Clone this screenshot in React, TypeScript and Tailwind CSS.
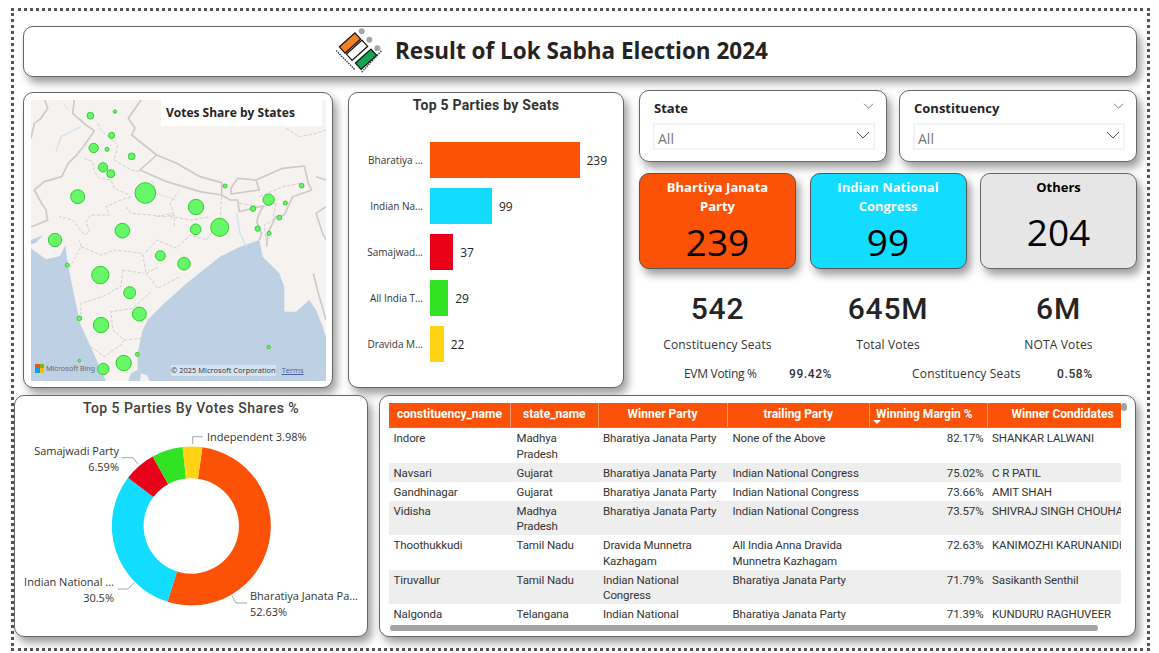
const ORANGE = '#fb5207'
const CYAN = '#12dcff'
const RED = '#ea0019'
const GREEN = '#32e324'
const YELLOW = '#ffd314'

const cardClass = 'rounded-[10px] border border-[#666] bg-white shadow-[4px_6px_8px_rgba(0,0,0,0.38)]'

const bubbles: [number, number, number][] = [
  [271, 347, 10], [345, 335, 5], [335, 406, 9], [281, 444, 14], [321, 448, 6], [395, 469, 10],
  [309, 502, 14], [332, 521, 12], [233, 590, 21], [436, 579, 31], [675, 558, 6], [905, 557, 7],
  [806, 599, 17], [856, 609, 6], [759, 626, 8], [588, 621, 23], [838, 653, 7], [659, 682, 27],
  [587, 688, 16], [367, 692, 22], [773, 686, 8], [807, 700, 6], [165, 720, 20], [202, 795, 6],
  [481, 767, 15], [552, 791, 19], [301, 825, 26], [389, 878, 18], [418, 942, 21], [238, 955, 7],
  [303, 975, 23], [806, 1041, 5], [412, 1063, 6], [238, 1082, 4], [371, 1089, 23], [310, 1107, 17],
]

const borders = [
  'M93 415 L103 370 L123 355 L143 325 L135 300',
  'M223 300 L218 340 L258 375 L283 392 L250 440 L225 470 L205 490 L185 530 L133 545 L103 570 L125 610 L138 630 L143 660 L108 675 L93 680',
  'M423 300 L385 355 L405 385 L395 405 L470 465 L420 510 L500 545 L600 575 L665 585 L665 548 L600 530 L530 490 L470 465',
  'M665 585 L690 600 L713 600 L718 635 L790 618 L778 640 L770 665 L785 700 L778 720',
  'M693 565 L713 535 L768 540 L778 570 L693 582 L693 565',
  'M768 540 L848 505 L913 498 L925 550 L935 570 L878 590 L853 645 L828 650 L803 700 L800 740',
  'M948 530 L978 540',
  'M978 620 L948 640 L968 700 L978 720',
  'M940 820 L955 880 L978 960',
]

const stateLines = [
  'M253 475 L278 485 L283 515 L298 535 L333 540 L343 565 L388 585',
  'M393 590 L363 600 L318 620 L328 645 L273 645 L258 665 L268 695 L253 705 L218 660 L178 650',
  'M378 620 L393 640 L453 645 L493 650 L523 645 L523 680',
  'M293 370 L303 390 L353 435 L343 480 L393 510 L423 515',
  'M208 805 L243 740 L238 720',
  'M243 740 L303 765 L343 750 L428 760 L438 820 L478 800',
  'M343 870 L308 890 L243 910 L243 945',
  'M368 810 L363 860 L343 870 M368 810 L433 820',
  'M453 875 L398 925 L333 935 L338 990 L373 1020 L423 1015',
  'M273 1040 L313 1070 L363 1035 L373 1020',
  'M438 820 L473 865 L540 830',
  'M470 650 L520 640 L510 610 L540 570',
  'M660 660 L620 720 L570 705 L530 745 L470 720 L435 760',
  'M665 590 L660 660 M510 650 L575 660 L630 650',
  'M718 610 L788 620 L828 610 M778 590 L848 560 L903 550',
  'M828 610 L818 660 L793 675 L798 720',
  'M858 385 L898 410 L948 400 L978 390',
]

function MapVisual() {
  return (
    <svg viewBox="93 300 885 843" className="block h-full w-full">
      <defs>
        <filter id="soft" x="0" y="0" width="100%" height="100%">
          <feGaussianBlur stdDeviation="1.3" />
        </filter>
      </defs>
      <g filter="url(#soft)">
        <rect x="93" y="300" width="885" height="843" fill="#f5f2ef" />
        <path
          d="M93 745 L138 778 L180 768 L196 735 L203 790 L215 850 L240 970 L290 1080 L318 1143 L385 1143 L393 1120 L413 1110 L413 1060 L428 990 L443 960 L493 910 L560 850 L610 810 L660 770 L720 740 L778 720 L788 770 L838 820 L853 860 L853 935 L888 935 L928 900 L948 930 L968 980 L978 1010 L978 1143 L93 1143 Z"
          fill="#bdd0e4"
        />
        <path d="M93 720 L128 706 L108 728 L93 733 Z" fill="#bdd0e4" />
        <path d="M423 1120 L440 1125 L450 1143 L420 1143 Z" fill="#f5f2ef" />
        <path d="M168 455 L183 410 L243 380" fill="none" stroke="#d3e3f2" strokeWidth="4" />
        <path d="M190 310 L205 330 M455 540 L470 580 L530 600" fill="none" stroke="#d3e3f2" strokeWidth="3" />
        <path d="M710 640 L720 700 L740 740" fill="none" stroke="#cfe0f0" strokeWidth="4" />
        {stateLines.map((d) => (
          <path key={d} d={d} fill="none" stroke="#d2cfcc" strokeWidth="3" strokeDasharray="10 5" />
        ))}
        {borders.map((d) => (
          <path key={d} d={d} fill="none" stroke="#cdcac7" strokeWidth="5" strokeLinejoin="round" />
        ))}
      </g>
      {bubbles.map(([cx, cy, r]) => (
        <circle key={`${cx}-${cy}`} cx={cx} cy={cy} r={r} fill="#68f768" stroke="#2fcf2f" strokeWidth="3" />
      ))}
    </svg>
  )
}

function MapCard() {
  return (
    <div className={`${cardClass} h-[296px] w-[310px] pt-[7px] pl-[7px]`}>
      <div className="relative h-[281px] w-[295px] overflow-hidden">
        <MapVisual />
        <div className="absolute top-0 left-[130px] flex h-[26px] w-[161px] items-center bg-white pl-[5px] text-[12px] font-bold text-[#252423]">
          Votes Share by States
        </div>
        <div className="absolute bottom-[7px] left-[4px] flex items-center gap-[2px]">
          <div className="grid h-[9px] w-[9px] grid-cols-2">
            <span className="bg-[#f25022]" />
            <span className="bg-[#7fba00]" />
            <span className="bg-[#00a4ef]" />
            <span className="bg-[#ffb900]" />
          </div>
          <span className="font-['Roboto',sans-serif] text-[7.5px] text-[#6e6e6e]">Microsoft Bing</span>
        </div>
        <div className="absolute bottom-[5px] left-[140px] flex gap-[6px] text-[7.5px] text-[#333]">
          <span className="bg-white/40">© 2025 Microsoft Corporation</span>
          <span className="text-[#4a5fa8] underline">Terms</span>
        </div>
      </div>
    </div>
  )
}

const seatBars = [
  { label: 'Bharatiya ...', value: 239, color: ORANGE },
  { label: 'Indian Na...', value: 99, color: CYAN },
  { label: 'Samajwad...', value: 37, color: RED },
  { label: 'All India T...', value: 29, color: GREEN },
  { label: 'Dravida M...', value: 22, color: YELLOW },
]

function BarCard() {
  return (
    <div className={`${cardClass} h-[296px] w-[276px]`}>
      <h2 className="pt-[2px] text-center font-['Roboto',sans-serif] text-[14px] leading-[20px] font-bold tracking-[0.25px] text-[#333]">
        Top 5 Parties by Seats
      </h2>
      <div className="mt-[27px] flex flex-col gap-[10px]">
        {seatBars.map((bar) => (
          <div key={bar.label} className="flex h-[36px] items-center">
            <span className="w-[74px] text-right text-[10px] text-[#333]">{bar.label}</span>
            <div
              className="ml-[7px] h-full"
              style={{ width: (bar.value / 239) * 149.5, backgroundColor: bar.color }}
            />
            <span className="ml-[7px] pt-[2px] text-[12px] text-[#252423]">{bar.value}</span>
          </div>
        ))}
      </div>
    </div>
  )
}

function Chevron({ className }: { className: string }) {
  return (
    <svg viewBox="0 0 14 8" className={className} fill="none" stroke="#555" strokeWidth="1">
      <path d="M1 1 L7 7 L13 1" />
    </svg>
  )
}

function FilterCard({ title, width }: { title: string; width: string }) {
  return (
    <div className={`${cardClass} h-[72px] ${width} pt-[8px] pr-[11px] pl-[13px]`}>
      <div className="flex h-[20px] items-center justify-between pr-[1px] pl-[1px]">
        <span className="text-[13px] font-bold text-[#252423]">{title}</span>
        <Chevron className="mb-[6px] h-[6px] w-[11px]" />
      </div>
      <div className="mt-[4px] flex h-[27px] items-center justify-between border-2 border-[#f4f4f4] pr-[3px] pl-[3px]">
        <span className="pt-[3px] text-[14px] text-[#777]">All</span>
        <Chevron className="mb-[3px] h-[8px] w-[14px]" />
      </div>
    </div>
  )
}

function RightColumn() {
  return (
    <div className="-mt-[2px] w-[498px]">
      <div className="flex gap-[12px]">
        <FilterCard title="State" width="w-[248px]" />
        <FilterCard title="Constituency" width="w-[238px]" />
      </div>
      <div className="mt-[11px] flex justify-between">
        <div className="h-[96px] w-[157px] rounded-[10px] border border-[#555] bg-[#fb5207] pt-[4px] text-center shadow-[4px_6px_8px_rgba(0,0,0,0.38)]">
          <div className="text-[13px] leading-[19px] font-bold text-white">Bhartiya Janata<br />Party</div>
          <div className="text-[37px] leading-[52px] text-black">239</div>
        </div>
        <div className="h-[96px] w-[157px] rounded-[10px] border border-[#555] bg-[#12dcff] pt-[4px] text-center shadow-[4px_6px_8px_rgba(0,0,0,0.38)]">
          <div className="text-[13px] leading-[19px] font-bold text-white">Indian National<br />Congress</div>
          <div className="text-[37px] leading-[52px] text-black">99</div>
        </div>
        <div className="h-[96px] w-[157px] rounded-[10px] border border-[#666] bg-[#e6e6e6] pt-[4px] text-center shadow-[4px_6px_8px_rgba(0,0,0,0.38)]">
          <div className="text-[13px] leading-[19px] font-bold text-black">Others</div>
          <div className="mt-[9px] text-[37px] leading-[52px] text-black">204</div>
        </div>
      </div>
      <div className="mt-[11px] h-[108px] bg-white">
        <div className="flex justify-between text-center">
          {[
            ['542', 'Constituency Seats'],
            ['645M', 'Total Votes'],
            ['6M', 'NOTA Votes'],
          ].map(([value, label]) => (
            <div key={label} className="w-[157px]">
              <div className="pt-[11px] font-['Roboto',sans-serif] text-[30px] leading-[36px] font-medium tracking-[0.8px] text-[#252423]">{value}</div>
              <div className="mt-[10px] text-[12px] leading-[16px] tracking-[0.15px] text-[#333]">{label}</div>
            </div>
          ))}
        </div>
        <div className="mt-[13px] flex text-[12px] leading-[16px] text-[#333]">
          <span className="ml-[45px] w-[105px] tracking-[-0.3px]">EVM Voting %</span>
          <span className="font-['Roboto',sans-serif] font-medium tracking-[0.6px]">99.42%</span>
          <span className="ml-[80px] w-[145px] tracking-[0.15px]">Constituency Seats</span>
          <span className="font-['Roboto',sans-serif] font-medium tracking-[0.6px]">0.58%</span>
        </div>
      </div>
    </div>
  )
}

const slices = [
  { share: 52.63, color: ORANGE },
  { share: 30.5, color: CYAN },
  { share: 6.59, color: RED },
  { share: 6.3, color: GREEN },
  { share: 3.98, color: YELLOW },
]

function slicePath(start: number, end: number) {
  const cx = 191.3
  const cy = 526
  const outer = 79.5
  const inner = 47.7
  const point = (r: number, deg: number) => {
    const a = ((deg - 90) * Math.PI) / 180
    return `${(cx + r * Math.cos(a)).toFixed(2)} ${(cy + r * Math.sin(a)).toFixed(2)}`
  }
  const large = end - start > 180 ? 1 : 0
  return `M${point(outer, start)} A${outer} ${outer} 0 ${large} 1 ${point(outer, end)} L${point(inner, end)} A${inner} ${inner} 0 ${large} 0 ${point(inner, start)} Z`
}

function DonutCard() {
  let angle = 8
  const paths = slices.map((slice) => {
    const start = angle
    angle += (slice.share / 100) * 360
    return { d: slicePath(start, angle), color: slice.color }
  })

  return (
    <div className={`${cardClass} h-[242px] w-[354px]`}>
      <h2 className="h-[26px] pt-[2px] text-center font-['Roboto',sans-serif] text-[14px] leading-[20px] font-medium tracking-[0.45px] text-[#404040]">
        Top 5 Parties By Votes Shares %
      </h2>
      <svg viewBox="15 422 352 214" className="block h-[214px] w-[352px]">
        {paths.map((p) => (
          <path key={p.color} d={p.d} fill={p.color} />
        ))}
        <g fill="none" stroke="#a6a6a6" strokeWidth="1">
          <path d="M192.7 444 L192.7 436.7 L202.7 436.7" />
          <path d="M121.7 457.7 L133 457.7 L138 464" />
          <path d="M118 589 L128 589 L134 582.7" />
          <path d="M232 595.7 L236 603 L247 603" />
        </g>
        <g className="fill-[#333] text-[11px]">
          <text x="207" y="441">Independent 3.98%</text>
          <text x="119" y="455" textAnchor="end">Samajwadi Party</text>
          <text x="119" y="471" textAnchor="end">6.59%</text>
          <text x="114" y="586" textAnchor="end">Indian National ...</text>
          <text x="114" y="602" textAnchor="end">30.5%</text>
          <text x="250" y="600">Bharatiya Janata Pa...</text>
          <text x="250" y="616">52.63%</text>
        </g>
      </svg>
    </div>
  )
}

const rows = [
  { name: 'Indore', state: 'Madhya Pradesh', winner: 'Bharatiya Janata Party', trailing: 'None of the Above', margin: '82.17%', candidate: 'SHANKAR LALWANI', h: 'h-[34.5px]' },
  { name: 'Navsari', state: 'Gujarat', winner: 'Bharatiya Janata Party', trailing: 'Indian National Congress', margin: '75.02%', candidate: 'C R PATIL', h: 'h-[19px]' },
  { name: 'Gandhinagar', state: 'Gujarat', winner: 'Bharatiya Janata Party', trailing: 'Indian National Congress', margin: '73.66%', candidate: 'AMIT SHAH', h: 'h-[19px]' },
  { name: 'Vidisha', state: 'Madhya Pradesh', winner: 'Bharatiya Janata Party', trailing: 'Indian National Congress', margin: '73.57%', candidate: 'SHIVRAJ SINGH CHOUHAN', h: 'h-[34.5px]' },
  { name: 'Thoothukkudi', state: 'Tamil Nadu', winner: 'Dravida Munnetra Kazhagam', trailing: 'All India Anna Dravida Munnetra Kazhagam', margin: '72.63%', candidate: 'KANIMOZHI KARUNANIDHI', h: 'h-[34.5px]' },
  { name: 'Tiruvallur', state: 'Tamil Nadu', winner: 'Indian National Congress', trailing: 'Bharatiya Janata Party', margin: '71.79%', candidate: 'Sasikanth Senthil', h: 'h-[34.5px]' },
  { name: 'Nalgonda', state: 'Telangana', winner: 'Indian National Congress', trailing: 'Bharatiya Janata Party', margin: '71.39%', candidate: 'KUNDURU RAGHUVEER', h: 'h-[34.5px]' },
]

const gridCols = 'grid-cols-[122px_87.5px_129px_142.5px_117.5px_133.5px]'

function TableCard() {
  const headers = ['constituency_name', 'state_name', 'Winner Party', 'trailing Party']
  return (
    <div className={`${cardClass} relative h-[242px] w-[757px] pt-[6.5px] pl-[9px]`}>
      <div className="h-[221px] w-[732px] overflow-hidden font-['Roboto',sans-serif] text-[11.5px] tracking-[-0.1px] text-[#333]">
        <div className={`grid h-[25.5px] ${gridCols} border-b border-[#5b8fd0] bg-[#fb5207] text-[12px] leading-[22px] font-bold tracking-normal whitespace-nowrap text-white`}>
          {headers.map((h) => (
            <div key={h} className="border-r border-white/40 text-center">{h}</div>
          ))}
          <div className="relative border-r border-white/40 pl-[6px]">
            Winning Margin %
            <span className="absolute top-[17px] left-[3px] h-0 w-0 border-x-[4px] border-t-[4px] border-x-transparent border-t-white" />
          </div>
          <div className="pl-[24px]">Winner Condidates</div>
        </div>
        {rows.map((row, i) => (
          <div
            key={row.name}
            className={`grid ${row.h} ${gridCols} overflow-hidden pt-[3px] leading-[15.5px] ${i % 2 === 1 ? 'bg-[#eeeeee]' : 'bg-white'}`}
          >
            <div className="pl-[4.5px]">{row.name}</div>
            <div className="pl-[5.5px]">{row.state}</div>
            <div className="pl-[4.5px]">{row.winner}</div>
            <div className="pl-[5px]">{row.trailing}</div>
            <div className="pr-[4px] text-right">{row.margin}</div>
            <div className="pl-[4.5px] whitespace-nowrap">{row.candidate}</div>
          </div>
        ))}
      </div>
      <div className="mt-[1.5px] ml-[1px] h-[6px] w-[708px] rounded-full bg-[#a3a3a3]" />
      <div className="absolute top-[7px] left-[741px] h-[8px] w-[6px] rounded-full bg-[#a3a3a3]" />
    </div>
  )
}

function ElectionLogo() {
  return (
    <svg viewBox="0 0 50 50" className="h-[50px] w-[50px] shrink-0">
      <g stroke="#111" strokeWidth="1.2">
        <rect x="3.5" y="11.75" width="21" height="8.5" fill="#f58220" transform="rotate(-42 14 16)" />
        <rect x="10.5" y="19" width="21" height="8.5" fill="#fff" transform="rotate(-42 21 23.2)" />
        <rect x="19.5" y="28" width="21" height="8.5" fill="#12a650" transform="rotate(-42 30 32.2)" />
      </g>
      <circle cx="25.7" cy="4.2" r="3" fill="#a6a6a6" />
      <circle cx="33.3" cy="12.8" r="3" fill="#a6a6a6" />
      <circle cx="41.3" cy="21.2" r="3" fill="#a6a6a6" />
      <path d="M0 23.5 L19 42.8 M25.7 45.2 L45.7 23.5" stroke="#444" strokeWidth="1.5" strokeDasharray="1.5 1" fill="none" />
    </svg>
  )
}

export default function App() {
  return (
    <div className="h-[653px] w-[1159px] overflow-hidden bg-white pt-[8px] pl-[11px] font-['Open_Sans',sans-serif]">
      <div className="h-[643px] w-[1139px] border-[3px] border-dotted border-[#555]">
        <div className={`${cardClass} mt-[15px] ml-[9px] flex h-[51px] w-[1114px] items-center pl-[312px]`}>
          <ElectionLogo />
          <h1 className="mb-[2px] ml-[9px] text-[22.5px] font-bold text-[#252423]">Result of Lok Sabha Election 2024</h1>
        </div>
        <div className="mt-[15px] ml-[9px] flex gap-[15px]">
          <MapCard />
          <BarCard />
          <RightColumn />
        </div>
        <div className="mt-[7px] flex gap-[11px]">
          <DonutCard />
          <TableCard />
        </div>
      </div>
    </div>
  )
}
